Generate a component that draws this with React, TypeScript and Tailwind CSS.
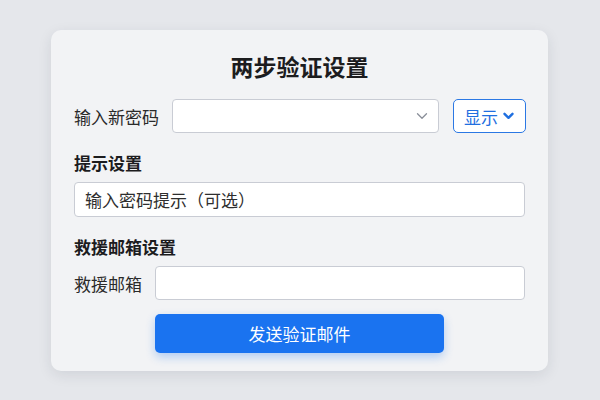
import * as React from 'react';

const font = { fontFamily: '"Noto Sans CJK SC", "Noto Sans", sans-serif' };

export default function App() {
  const [show, setShow] = React.useState(false);

  return (
    <div className="w-[600px] h-[400px] bg-[#e5e7eb] pt-[30px] pl-[51px]" style={font}>
      <div className="w-[497px] h-[341px] rounded-[10px] bg-[#f2f3f5] px-[23px] pt-[18px] pb-[18px] shadow-[0_4px_14px_rgba(30,40,60,0.10)]">
        <h1 className="h-[36px] flex items-center justify-center text-[23px] font-bold text-[#1c1c1e]">
          两步验证设置
        </h1>

        <div className="mt-[15px] flex items-center h-[34px]">
          <label className="w-[85px] shrink-0 whitespace-nowrap text-[17px] text-[#2a2a2a] leading-none">输入新密码</label>
          <div className="ml-[13px] w-[267px] shrink-0 h-[34px] rounded-[4px] border border-[#c9ccd4] bg-white flex items-center justify-end pr-[10px]">
            <svg width="12" height="8" viewBox="0 0 12 8" fill="none">
              <path d="M1.5 1.8 6 6.2 10.5 1.8" stroke="#8a8f99" strokeWidth="1.3" strokeLinecap="round" strokeLinejoin="round" />
            </svg>
          </div>
          <button
            onClick={() => setShow(!show)}
            className="ml-[14px] w-[73px] shrink-0 h-[34px] rounded-[5px] border border-[#2b78e4] bg-white flex items-center pl-[10px] gap-[5px] text-[17px] text-[#1f6fe0]"
          >
            <span className="leading-none whitespace-nowrap">显示</span>
            <svg width="11" height="8" viewBox="0 0 11 8" fill="none">
              <path d="M1.5 1.8 5.5 5.8 9.5 1.8" stroke="#1f6fe0" strokeWidth="2.4" strokeLinecap="round" strokeLinejoin="round" />
            </svg>
          </button>
        </div>

        <div className="mt-[18px] h-[24px] flex items-center text-[17px] font-bold text-[#1c1c1e]">提示设置</div>
        <div className="mt-[7px] h-[35px] rounded-[4px] border border-[#c9ccd4] bg-white flex items-center px-[10px] text-[17px] text-[#2e2e2e]">
          输入密码提示（可选）
        </div>

        <div className="mt-[18px] h-[24px] flex items-center text-[17px] font-bold text-[#1c1c1e]">救援邮箱设置</div>
        <div className="mt-[7px] flex items-center h-[34px]">
          <label className="w-[69px] shrink-0 whitespace-nowrap text-[17px] text-[#2a2a2a] leading-none">救援邮箱</label>
          <div className="ml-[12px] flex-1 h-[34px] rounded-[4px] border border-[#c9ccd4] bg-white" />
        </div>

        <button className="mt-[14px] ml-[81px] w-[289px] h-[39px] rounded-[5px] bg-[#1a73f0] text-white text-[17px] flex items-center justify-center shadow-[0_4px_10px_rgba(26,115,240,0.30)]">
          发送验证邮件
        </button>
      </div>
    </div>
  );
}
